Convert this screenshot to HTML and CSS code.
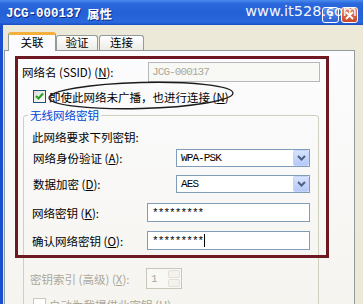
FILE: index.html
```html
<!DOCTYPE html>
<html lang="zh">
<head>
<meta charset="utf-8">
<title>JCG-000137 属性</title>
<link rel="stylesheet" href="styles.css">
</head>
<body>
<div class="window">
  <div class="titlebar">
    <span class="title"><span class="mono">JCG-000137</span><span>属性</span></span>
    <div class="tb-buttons">
      <span class="tb-btn help">?</span>
      <span class="tb-btn close">
        <svg width="9" height="9" viewBox="0 0 9 9"><path d="M1 1L8 8M8 1L1 8" stroke="#fff" stroke-width="1.8"/></svg>
      </span>
    </div>
    <span class="watermark">www.it528.com</span>
  </div>
  <div class="frame">
    <div class="tabs">
      <div class="tab tab-1 selected">关联</div>
      <div class="tab tab-2">验证</div>
      <div class="tab tab-3">连接</div>
    </div>
    <div class="panel">
      <div class="row ssid">
        <span class="lbl lbl-ssid">网络名 (SSID) (<u>N</u>):</span>
        <div class="textbox textbox-ssid disabled"><span class="val">JCG-000137</span></div>
      </div>
      <div class="check-row">
        <span class="checkbox checked">
          <svg width="9" height="9" viewBox="0 0 9 9"><path d="M1 4L3.5 6.5L8 1.5" fill="none" stroke="#21A121" stroke-width="2"/></svg>
        </span>
        <span>即使此网络未广播，也进行连接 (<u>N</u>)</span>
      </div>
      <fieldset class="group">
        <legend>无线网络密钥</legend>
        <div class="note">此网络要求下列密钥:</div>
        <div class="row sel-row first">
          <span class="lbl lbl-sel">网络身份验证 (<u>A</u>):</span>
          <div class="combo"><span class="val">WPA-PSK</span>
            <span class="combo-btn"><svg width="9" height="6" viewBox="0 0 9 6"><path d="M1 1L4.5 4.5L8 1" fill="none" stroke="#4D6185" stroke-width="2"/></svg></span>
          </div>
        </div>
        <div class="row sel-row second">
          <span class="lbl lbl-sel">数据加密 (<u>D</u>):</span>
          <div class="combo"><span class="val">AES</span>
            <span class="combo-btn"><svg width="9" height="6" viewBox="0 0 9 6"><path d="M1 1L4.5 4.5L8 1" fill="none" stroke="#4D6185" stroke-width="2"/></svg></span>
          </div>
        </div>
        <div class="row key-row">
          <span class="lbl lbl-key">网络密钥 (<u>K</u>):</span>
          <div class="textbox textbox-key"><span class="val">*********</span></div>
        </div>
        <div class="row key-row confirm">
          <span class="lbl lbl-key">确认网络密钥 (<u>O</u>):</span>
          <div class="textbox textbox-key"><span class="val">*********</span><span class="caret"></span></div>
        </div>
        <div class="row idx-row">
          <span class="lbl lbl-idx gray">密钥索引 (高级) (<u>X</u>):</span>
          <div class="spin"><span class="val gray">1</span>
            <span class="spin-btns"><span class="spin-b"></span><span class="spin-b"></span></span>
          </div>
        </div>
        <div class="check-row auto">
          <span class="checkbox disabled"></span>
          <span class="gray">自动为我提供此密钥 (<u>H</u>)</span>
        </div>
      </fieldset>
    </div>
  </div>
  <div class="annot-rect"></div>
  <svg class="annot-ellipse" width="363" height="304" viewBox="0 0 363 304">
    <ellipse cx="141" cy="95.5" rx="92" ry="13" fill="none" stroke="#1b1b1b" stroke-width="1.3" transform="rotate(-1.5 141 95.5)"/>
  </svg>
</div>
</body>
</html>
```

FILE: styles.css
```css
* { box-sizing: border-box; }
body {
  margin: 0;
  width: 363px;
  height: 304px;
  overflow: hidden;
  font-family: "Noto Sans CJK SC", sans-serif;
  font-size: 11.5px;
  color: #000;
}
.window {
  position: relative;
  width: 363px;
  height: 304px;
  background: #ECE9D8;
  display: flex;
  flex-direction: column;
  overflow: hidden;
}
.titlebar {
  position: relative;
  flex: none;
  height: 25px;
  display: flex;
  align-items: center;
  padding: 0 5px 0 6px;
  background: linear-gradient(#4A8BF0 0%, #2B68DC 14%, #2460D6 55%, #2A68DE 88%, #1C4FC4 100%);
}
.title {
  display: flex;
  align-items: center;
  gap: 6px;
  color: #fff;
  font-weight: bold;
  font-size: 12.5px;
  text-shadow: 1px 1px 0 #0C2A8A;
  margin-top: 2px;
}
.mono { font-family: "Liberation Mono", monospace; }
.tb-buttons {
  margin-left: auto;
  display: flex;
  gap: 2px;
  margin-top: 5px;
}
.tb-btn {
  width: 17px;
  height: 16px;
  border: 1px solid #fff;
  border-radius: 3px;
  display: flex;
  align-items: center;
  justify-content: center;
  color: #fff;
  font: bold 11px "DejaVu Sans", sans-serif;
}
.help { background: linear-gradient(#5A8DEB, #2F62D4); }
.close { background: linear-gradient(#E8805E, #C9472A); }
.watermark {
  position: absolute;
  right: 6px;
  top: 3px;
  color: #fff;
  font-family: "DejaVu Sans", sans-serif;
  font-size: 14.5px;
  opacity: 0.95;
}
.frame {
  flex: 1;
  min-height: 0;
  display: flex;
  flex-direction: column;
  border-left: 3px solid #1A4FD0;
  padding-left: 1px;
}
.tabs {
  position: relative;
  z-index: 1;
  flex: none;
  height: 26px;
  margin-bottom: -1px;
  display: flex;
  align-items: flex-end;
  padding-left: 4px;
}
.tab {
  height: 15px;
  margin-bottom: 1px;
  border: 1px solid #919B9C;
  border-bottom: none;
  border-radius: 3px 3px 0 0;
  background: linear-gradient(#FFFFFF, #ECEBE6);
  display: flex;
  align-items: center;
  justify-content: center;
  line-height: 1;
}
.tab.selected {
  height: 19px;
  margin-bottom: 0;
  background: #FCFCFE;
  border-top: 3px solid #F5B03C;
  padding-bottom: 1px;
}
.tab-1 { width: 48px; }
.tab-2 { width: 42px; }
.tab-3 { width: 45px; margin-left: 1px; }
.panel {
  flex: 1;
  width: 351px;
  border: 1px solid #919B9C;
  background: linear-gradient(#FCFCFE, #F5F4EF);
  padding: 11px 0 0 17px;
}
.row {
  display: flex;
  align-items: center;
}
.lbl { flex: none; white-space: nowrap; }
.ssid { height: 20px; }
.lbl-ssid { width: 126px; }
.textbox {
  height: 100%;
  border: 1px solid #7F9DB9;
  background: #fff;
  display: flex;
  align-items: center;
  padding-left: 4px;
}
.textbox.disabled {
  border-color: #B5B8BC;
  background: #F8F8F5;
  color: #ACA899;
}
.textbox-ssid { width: 172px; padding-left: 3px; }
.val {
  font-family: "Liberation Mono", monospace;
  font-size: 11px;
  letter-spacing: -0.9px;
}
.check-row {
  display: flex;
  align-items: center;
  gap: 3px;
  height: 13px;
  margin: 8px 0 0 11px;
  white-space: nowrap;
}
.checkbox {
  flex: none;
  width: 13px;
  height: 13px;
  border: 1px solid #1C5180;
  background: linear-gradient(135deg, #DCDBD5, #FFFFFF);
  display: flex;
  align-items: center;
  justify-content: center;
}
.checkbox.disabled {
  border-color: #CAC8BB;
  background: #fff;
}
.group {
  margin: 5px 0 0 1px;
  width: 296px;
  border: 1px solid #D0D0BF;
  border-radius: 3px;
  padding: 8px 8px 0 8px;
  min-width: 0;
}
.group legend {
  color: #0046D5;
  line-height: 14px;
  padding: 0 2px;
  margin-left: -4px;
}
.note { height: 14px; line-height: 14px; white-space: nowrap; }
.sel-row { height: 18px; }
.sel-row.first { margin-top: 5px; }
.sel-row.second { margin-top: 8px; }
.lbl-sel { width: 144px; padding-left: 1px; }
.combo {
  position: relative;
  width: 134px;
  height: 100%;
  border: 1px solid #7F9DB9;
  background: #fff;
  display: flex;
  align-items: center;
  padding-left: 4px;
}
.combo-btn {
  margin-left: auto;
  width: 16px;
  height: 16px;
  border: 1px solid #C3D3FD;
  border-radius: 2px;
  background: linear-gradient(#D7E3FE, #B5C8F7);
  display: flex;
  align-items: center;
  justify-content: center;
}
.key-row { height: 19px; margin-top: 10px; }
.key-row.confirm { margin-top: 9px; }
.lbl-key { width: 115px; }
.textbox-key { width: 163px; }
.caret {
  width: 1px;
  height: 13px;
  background: #000;
  margin-left: 1px;
}
.idx-row { height: 21px; margin-top: 18px; }
.lbl-idx { width: 116px; margin-left: -2px; }
.gray { color: #ACA899; }
.spin {
  width: 36px;
  height: 100%;
  border: 1px solid #C9C7BA;
  background: #F8F8F5;
  display: flex;
  align-items: center;
  padding-left: 4px;
}
.spin-btns {
  margin-left: auto;
  width: 14px;
  height: 100%;
  display: flex;
  flex-direction: column;
  gap: 1px;
  padding: 1px;
}
.spin-b {
  flex: 1;
  border: 1px solid #E2E0D6;
  border-radius: 2px;
  background: #F3F2EC;
}
.check-row.auto { margin: 9px 0 0 1px; }
.annot-rect {
  position: absolute;
  left: 15px;
  top: 56px;
  width: 314px;
  height: 202px;
  border: 3px solid #6E1821;
  pointer-events: none;
}
.annot-ellipse {
  position: absolute;
  left: 0;
  top: 0;
  pointer-events: none;
}
```
